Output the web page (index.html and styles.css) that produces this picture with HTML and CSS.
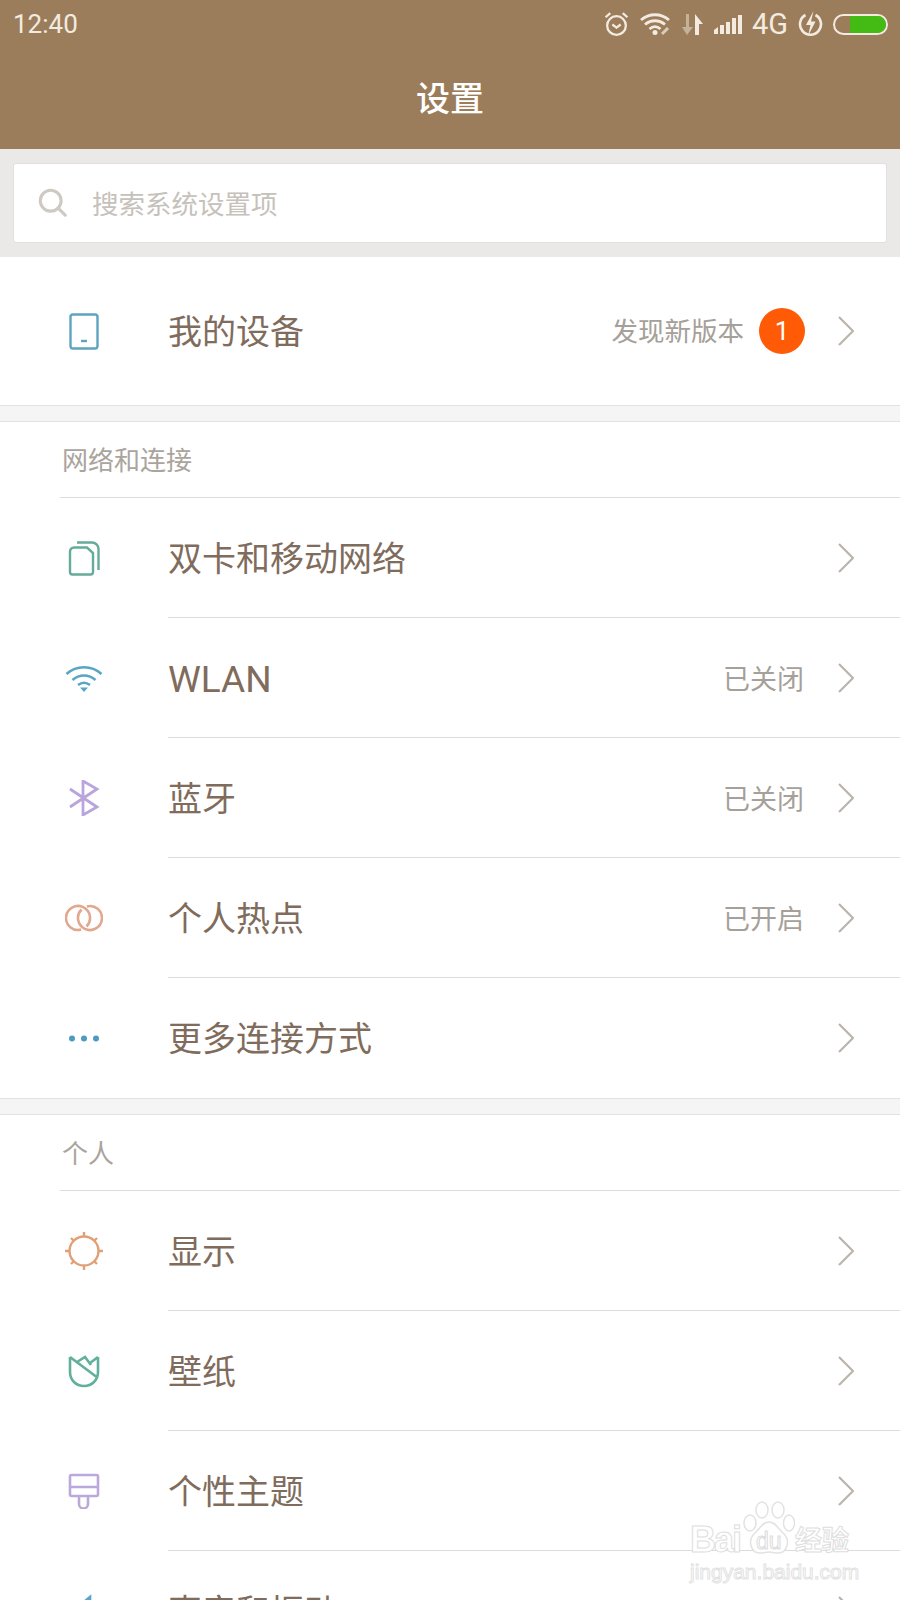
FILE: index.html
```html
<!DOCTYPE html>
<html>
<head>
    <title>设置</title>
    <link rel="stylesheet" href="styles.css">
</head>
<body>
<div class="phone">
    <div class="topbar">
        <div class="status">
            <span class="clock">12:40</span>
            <div class="status-icons">
                <svg width="27" height="26" viewBox="0 0 25 25" fill="none" stroke="#f3ebe0" stroke-width="2.200"><circle cx="12.500" cy="14" r="9"/><path d="M8.500 13l4 3 4-3M2 6l4.500-4M23 6l-4.500-4"/></svg>
                <svg width="32" height="24" viewBox="0 0 32 24" fill="none" stroke="#f3ebe0" stroke-width="2.800"><path d="M1 8c8-7 20-7 28 0M5 12.500c6-5 14-5 20 0M9.500 17c3.500-3 7.500-3 11 0"/><circle cx="15" cy="20.500" r="2.500" fill="#f3ebe0" stroke="none"/><path d="M22 22l6-6" stroke-width="3" stroke="#d9ccb9"/></svg>
                <svg width="22" height="24" viewBox="0 0 22 24"><path d="M4 2h3v13h4L5 23 0 15h4z" fill="#c4b299"/><path d="M13 23V2l8 10h-4v11z" fill="#f3ebe0"/></svg>
                <svg width="28" height="21" viewBox="0 0 28 21" fill="#f3ebe0"><path d="M0 16l4-3v7H0zM6 11h4v9H6zM12 8h4v12h-4zM18 4h4v16h-4zM24 1h4v19h-4z"/></svg>
                <span class="net">4G</span>
                <svg width="25" height="26" viewBox="0 0 25 26" fill="none" stroke="#f3ebe0" stroke-width="2.600"><path d="M7.500 4a10.500 10.500 0 1 0 10 0"/><path d="M15.500 0L8 14h4.500L10 25l7.500-14.500H13z" fill="#f3ebe0" stroke="none"/></svg>
                <div class="battery"><div class="battery-fill"></div></div>
            </div>
        </div>
        <div class="title">设置</div>
    </div>

    <div class="search-band">
        <div class="search-box">
            <svg width="29" height="29" viewBox="0 0 32 32" fill="none" stroke="#cfc9c3" stroke-width="3.400"><circle cx="14" cy="14" r="11.500"/><path d="M22.500 22.500l7.500 7.500" stroke-linecap="round"/></svg>
            <span class="search-text">搜索系统设置项</span>
        </div>
    </div>

    <div class="card device-card">
        <div class="row">
            <div class="icon">
                <svg width="30" height="37" viewBox="0 0 30 37" fill="none" stroke="#5ea3bf" stroke-width="2.400"><rect x="1.500" y="1.500" width="27" height="34" rx="2.500"/><path d="M12 28h6"/></svg>
            </div>
            <div class="row-body">
                <span class="name">我的设备</span>
                <span class="value">发现新版本</span>
                <span class="badge">1</span>
                <svg class="chev" width="16" height="30" viewBox="0 0 16 30"><path d="M1 1l14 14L1 29" fill="none" stroke="#bab4ac" stroke-width="2.200"/></svg>
            </div>
        </div>
    </div>

    <div class="gap"></div>

    <div class="card">
        <div class="section-label">网络和连接</div>
        <div class="row">
            <div class="icon">
                <svg width="32" height="35" viewBox="0 0 32 35" fill="none" stroke="#65ab9a" stroke-width="2.400"><path d="M6 6.500h13l6 5.500v19a2.500 2.500 0 0 1-2.500 2.500h-18A2.500 2.500 0 0 1 2 31V10.500a4 4 0 0 1 4-4z"/><path d="M9 1.500h15a6.500 6.500 0 0 1 6.500 6.500v21"/></svg>
            </div>
            <div class="row-body">
                <span class="name">双卡和移动网络</span>
                <svg class="chev" width="16" height="30" viewBox="0 0 16 30"><path d="M1 1l14 14L1 29" fill="none" stroke="#bab4ac" stroke-width="2.200"/></svg>
            </div>
        </div>
        <div class="row">
            <div class="icon">
                <svg width="38" height="27" viewBox="0 0 38 27" fill="none" stroke="#58a5c6" stroke-width="2.600"><path d="M1.500 9c10-9 25-9 35 0M7.500 15c7-6 16-6 23 0M13 20c4-3 8-3 12 0"/><path d="M15 22.500h8L19 27z" fill="#58a5c6" stroke="none"/></svg>
            </div>
            <div class="row-body">
                <span class="name latin">WLAN</span>
                <span class="value">已关闭</span>
                <svg class="chev" width="16" height="30" viewBox="0 0 16 30"><path d="M1 1l14 14L1 29" fill="none" stroke="#bab4ac" stroke-width="2.200"/></svg>
            </div>
        </div>
        <div class="row">
            <div class="icon">
                <svg width="32" height="36" viewBox="0 0 32 36" fill="none" stroke="#b9a5dc" stroke-width="2.800"><path d="M2 9l27 18-14 8V1l14 8L2 27"/></svg>
            </div>
            <div class="row-body">
                <span class="name">蓝牙</span>
                <span class="value">已关闭</span>
                <svg class="chev" width="16" height="30" viewBox="0 0 16 30"><path d="M1 1l14 14L1 29" fill="none" stroke="#bab4ac" stroke-width="2.200"/></svg>
            </div>
        </div>
        <div class="row">
            <div class="icon">
                <svg width="38" height="28" viewBox="0 0 38 28" fill="none" stroke="#e0a88e" stroke-width="2.600"><path d="M16.100 25.600A12 12 0 1 1 21.500 22.500"/><path d="M21.900 2.400A12 12 0 1 1 16.500 5.500"/></svg>
            </div>
            <div class="row-body">
                <span class="name">个人热点</span>
                <span class="value">已开启</span>
                <svg class="chev" width="16" height="30" viewBox="0 0 16 30"><path d="M1 1l14 14L1 29" fill="none" stroke="#bab4ac" stroke-width="2.200"/></svg>
            </div>
        </div>
        <div class="row">
            <div class="icon">
                <svg width="32" height="7" viewBox="0 0 32 7" fill="#4f9bc0"><circle cx="4" cy="3.500" r="3"/><circle cx="16" cy="3.500" r="3"/><circle cx="28" cy="3.500" r="3"/></svg>
            </div>
            <div class="row-body">
                <span class="name">更多连接方式</span>
                <svg class="chev" width="16" height="30" viewBox="0 0 16 30"><path d="M1 1l14 14L1 29" fill="none" stroke="#bab4ac" stroke-width="2.200"/></svg>
            </div>
        </div>
    </div>

    <div class="gap"></div>

    <div class="card">
        <div class="section-label">个人</div>
        <div class="row">
            <div class="icon">
                <svg width="38" height="38" viewBox="0 0 38 38" fill="none" stroke="#e29f76" stroke-width="2.400"><circle cx="19" cy="19" r="14.500"/><path d="M19 0v5M19 33v5M0 19h5M33 19h5M6 6l3 3M32 6l-3 3M6 32l3-3M32 32l-3-3"/></svg>
            </div>
            <div class="row-body">
                <span class="name">显示</span>
                <svg class="chev" width="16" height="30" viewBox="0 0 16 30"><path d="M1 1l14 14L1 29" fill="none" stroke="#bab4ac" stroke-width="2.200"/></svg>
            </div>
        </div>
        <div class="row">
            <div class="icon">
                <svg width="32" height="33" viewBox="0 0 32 33" fill="none" stroke="#62b09b" stroke-width="2.600"><path d="M2 2l28 21M30 2v15c0 8-6 14-14 14S2 25 2 17V2M9 7l8-5 6 8M30 2l-8 6"/></svg>
            </div>
            <div class="row-body">
                <span class="name">壁纸</span>
                <svg class="chev" width="16" height="30" viewBox="0 0 16 30"><path d="M1 1l14 14L1 29" fill="none" stroke="#bab4ac" stroke-width="2.200"/></svg>
            </div>
        </div>
        <div class="row">
            <div class="icon">
                <svg width="32" height="36" viewBox="0 0 32 36" fill="none" stroke="#bba9dc" stroke-width="2.600"><rect x="2" y="2" width="28" height="21" rx="1.500"/><path d="M2 14h28M11 23v8a4.500 4.500 0 0 0 9 0v-8"/></svg>
            </div>
            <div class="row-body">
                <span class="name">个性主题</span>
                <svg class="chev" width="16" height="30" viewBox="0 0 16 30"><path d="M1 1l14 14L1 29" fill="none" stroke="#bab4ac" stroke-width="2.200"/></svg>
            </div>
        </div>
        <div class="row">
            <div class="icon">
                <svg width="32" height="36" viewBox="0 0 32 36" fill="none" stroke="#58a5c6" stroke-width="2.600"><path d="M4 14h6l12-10v28L10 22H4z"/></svg>
            </div>
            <div class="row-body">
                <span class="name">声音和振动</span>
                <svg class="chev" width="16" height="30" viewBox="0 0 16 30"><path d="M1 1l14 14L1 29" fill="none" stroke="#bab4ac" stroke-width="2.200"/></svg>
            </div>
        </div>
    </div>

    <!-- watermark over the list -->
    <div class="watermark">
        <div class="wm-top">
            <span class="wm-bai">Bai</span>
            <div class="wm-paw">
                <svg width="52" height="54" viewBox="0 0 52 54" fill="#fff" stroke="#e2e2e2" stroke-width="1.500"><ellipse cx="7" cy="22" rx="6" ry="8"/><ellipse cx="19" cy="9" rx="6" ry="8"/><ellipse cx="35" cy="9" rx="6" ry="8"/><ellipse cx="46" cy="22" rx="5.500" ry="8"/><path d="M26 21c-7 0-9 7-15 12-6 6-4 19 6 19 4 0 6-1 9-1s5 1 9 1c10 0 12-13 6-19-6-5-8-12-15-12z"/></svg>
                <span class="wm-du">du</span>
            </div>
            <span class="wm-cn">经验</span>
        </div>
        <div class="wm-url">jingyan.baidu.com</div>
    </div>
</div>
</body>
</html>
```

FILE: styles.css
```css
html, body {
    margin: 0;
    padding: 0;
}
.phone {
    position: relative;
    width: 900px;
    height: 1600px;
    overflow: hidden;
    background: #fff;
    font-family: "Noto Sans CJK SC", "Liberation Sans", sans-serif;
}

/* top bar */
.topbar {
    height: 149px;
    background: #9b7d5b;
}
.status {
    display: flex;
    justify-content: space-between;
    align-items: center;
    height: 48px;
    padding: 0 12px 0 13px;
}
.clock {
    font-family: "Roboto", sans-serif;
    font-size: 26px;
    color: #f3ebe0;
}
.status-icons {
    display: flex;
    align-items: center;
    gap: 10px;
}
.net {
    font-family: "Roboto", sans-serif;
    font-size: 29px;
    color: #f3ebe0;
}
.battery {
    width: 51px;
    height: 17px;
    border: 2px solid #f3ebe0;
    border-radius: 11px;
    display: flex;
    justify-content: flex-end;
}
.battery-fill {
    width: 36px;
    background: #44bb14;
    border-radius: 1px 9px 9px 1px;
}
.title {
    text-align: center;
    color: #fff;
    font-size: 34px;
    font-weight: 500;
    line-height: 50px;
    margin-top: 24px;
}

/* search */
.search-band {
    height: 108px;
    box-sizing: border-box;
    padding: 14px 13px 13px;
    background: #ebe9e7;
}
.search-box {
    display: flex;
    align-items: center;
    height: 80px;
    box-sizing: border-box;
    padding-left: 24px;
    padding-bottom: 2px;
    background: #fff;
    border: 1px solid #e2e0de;
    border-radius: 3px;
}
.search-text {
    margin-left: 25px;
    font-size: 26.500px;
    color: #c6c1bb;
}

/* lists */
.device-card {
    height: 149px;
    border-bottom: 1px solid #e2e2e2;
    box-sizing: border-box;
}
.gap {
    height: 15px;
    background: #f5f5f5;
}
.gap + .card {
    border-top: 1px solid #e2e2e2;
    border-bottom: 1px solid #e2e2e2;
}
.section-label {
    height: 76px;
    box-sizing: border-box;
    margin-left: 60px;
    padding: 17px 0 0 2px;
    border-bottom: 1px solid #dcdcdc;
    font-size: 26px;
    color: #aaa49d;
    line-height: 40px;
}
.row {
    display: flex;
    height: 120px;
}
.device-card .row {
    height: 148px;
}
.icon {
    width: 168px;
    display: flex;
    justify-content: center;
    align-items: center;
}
.row-body {
    flex: 1;
    display: flex;
    align-items: center;
    padding-right: 46px;
    border-bottom: 1px solid #dcdcdc;
}
.row:last-child .row-body {
    border-bottom: none;
}
.device-card .row-body {
    border-bottom: none;
}
.name {
    flex: 1;
    font-size: 34px;
    padding-bottom: 3px;
    color: #7f6c5c;
}
.latin {
    font-family: "Roboto", sans-serif;
    font-size: 37px;
    padding-bottom: 0;
    padding-top: 4px;
}
.value {
    font-size: 27px;
    color: #a5a099;
    margin-right: 34px;
}
.device-card .value {
    font-size: 26.500px;
    padding-bottom: 3px;
}
.badge {
    width: 46px;
    height: 46px;
    border-radius: 50%;
    background: #ff5a05;
    color: #fff;
    font-family: "Roboto", sans-serif;
    font-size: 26px;
    line-height: 46px;
    text-align: center;
    margin: 0 33px 0 -19px;
}

/* baidu watermark */
.watermark {
    position: absolute;
    left: 690px;
    top: 1503px;
    width: 170px;
}
.wm-top {
    display: flex;
    align-items: flex-end;
    height: 52px;
}
.wm-bai {
    font-family: "Liberation Sans", sans-serif;
    font-size: 36px;
    font-weight: bold;
    letter-spacing: -2px;
    color: #fff;
    -webkit-text-stroke: 1px #dedede;
    line-height: 30px;
}
.wm-paw {
    position: relative;
    width: 52px;
    height: 54px;
    margin-left: 3px;
}
.wm-du {
    position: absolute;
    left: 13px;
    top: 27px;
    font-family: "Liberation Sans", sans-serif;
    font-size: 23px;
    color: #fff;
    -webkit-text-stroke: 1px #dcdcdc;
}
.wm-cn {
    font-size: 27px;
    font-weight: bold;
    color: #fff;
    -webkit-text-stroke: 1px #dedede;
    line-height: 32px;
}
.wm-url {
    font-family: "Liberation Sans", sans-serif;
    font-size: 21px;
    line-height: 22px;
    color: #fff;
    -webkit-text-stroke: 1px #e2e2e2;
    margin-top: 6px;
}
```
